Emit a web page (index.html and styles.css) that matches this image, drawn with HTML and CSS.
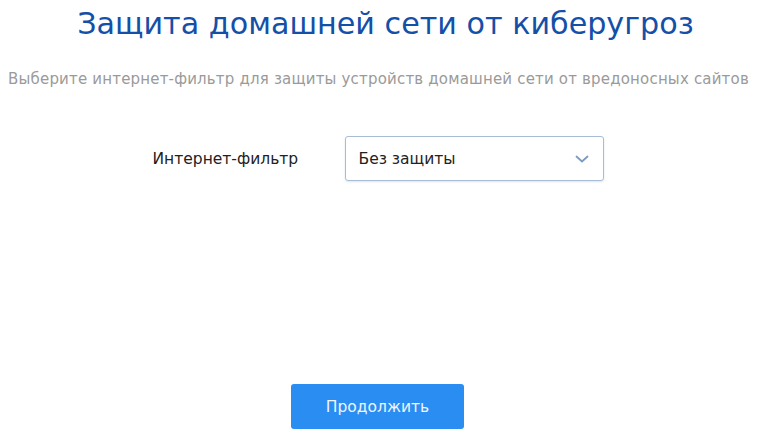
FILE: index.html
```html
<!DOCTYPE html>
<html lang="ru">
<head>
    <meta charset="UTF-8">
    <title>Защита домашней сети</title>
    <link rel="stylesheet" href="styles.css">
</head>
<body>
    <div class="page">
        <h1 class="title">Защита домашней сети от киберугроз</h1>
        <p class="subtitle">Выберите интернет-фильтр для защиты устройств домашней сети от вредоносных сайтов</p>

        <div class="field">
            <label class="field-label" for="filter">Интернет-фильтр</label>
            <div class="select">
                <span class="select-value">Без защиты</span>
                <svg class="select-arrow" width="14" height="8" viewBox="0 0 14 8">
                    <path d="M1.5 1.5 L7 6.5 L12.5 1.5" fill="none" stroke="#7b9bc4" stroke-width="1.8" stroke-linecap="round" stroke-linejoin="round"/>
                </svg>
            </div>
        </div>

        <div class="actions">
            <button class="btn-primary">Продолжить</button>
        </div>
    </div>
</body>
</html>
```

FILE: styles.css
```css
* {
    box-sizing: border-box;
}

body {
    margin: 0;
    background: #ffffff;
    font-family: 'DejaVu Sans', sans-serif;
}

.page {
    width: 763px;
    height: 435px;
    display: flex;
    flex-direction: column;
    align-items: center;
}

.title {
    margin: 6px 0 0 8px;
    font-size: 30.2px;
    font-weight: normal;
    color: #1450a8;
    line-height: 36px;
}

.subtitle {
    margin: 28px 6px 0 0;
    font-size: 15px;
    letter-spacing: 0.18px;
    color: #9a9a9a;
    line-height: 18px;
}

.field {
    margin-top: 48px;
    margin-right: 7px;
    display: flex;
    align-items: center;
    gap: 42px;
}

.field-label {
    width: 150px;
    font-size: 15.5px;
    color: #222;
}

.select {
    width: 259px;
    height: 45px;
    border: 1px solid #a9bcd5;
    border-radius: 3px;
    display: flex;
    align-items: center;
    justify-content: space-between;
    padding: 0 14px 0 13px;
    box-shadow: 0 1px 2px rgba(120, 150, 190, 0.25);
}

.select-value {
    font-size: 15.5px;
    color: #222;
}

.actions {
    margin-top: auto;
    margin-bottom: 6px;
    margin-right: 8px;
}

.btn-primary {
    width: 173px;
    height: 45px;
    border: none;
    border-radius: 3px;
    background: #2a8df2;
    color: #eef5ff;
    font-family: inherit;
    font-size: 15.5px;
    cursor: pointer;
}
```
